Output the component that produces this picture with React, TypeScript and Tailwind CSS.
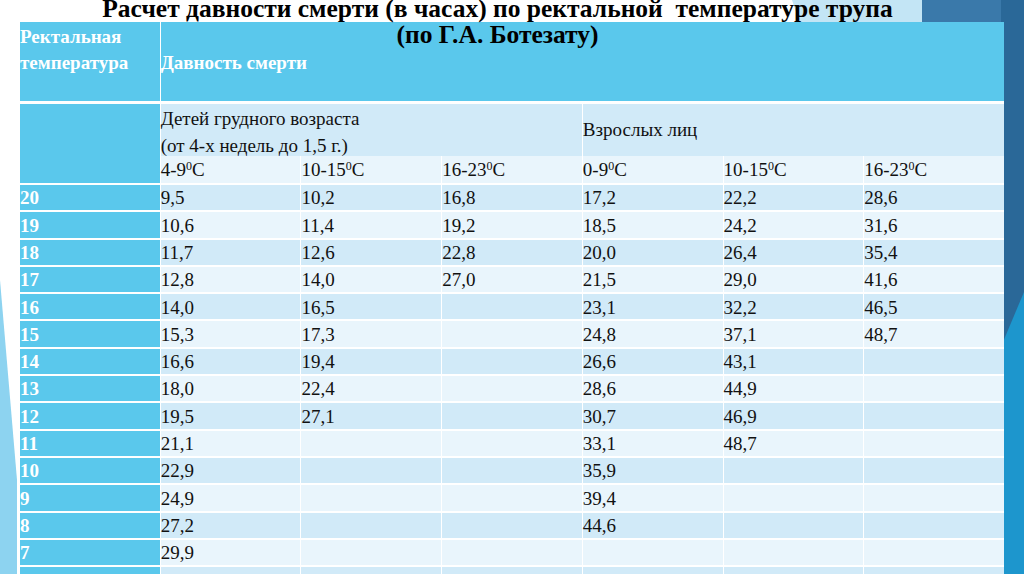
import React from 'react';

type Row = [string, string, string, string, string, string, string];

const rows: Row[] = [
  ['20', '9,5', '10,2', '16,8', '17,2', '22,2', '28,6'],
  ['19', '10,6', '11,4', '19,2', '18,5', '24,2', '31,6'],
  ['18', '11,7', '12,6', '22,8', '20,0', '26,4', '35,4'],
  ['17', '12,8', '14,0', '27,0', '21,5', '29,0', '41,6'],
  ['16', '14,0', '16,5', '', '23,1', '32,2', '46,5'],
  ['15', '15,3', '17,3', '', '24,8', '37,1', '48,7'],
  ['14', '16,6', '19,4', '', '26,6', '43,1', ''],
  ['13', '18,0', '22,4', '', '28,6', '44,9', ''],
  ['12', '19,5', '27,1', '', '30,7', '46,9', ''],
  ['11', '21,1', '', '', '33,1', '48,7', ''],
  ['10', '22,9', '', '', '35,9', '', ''],
  ['9', '24,9', '', '', '39,4', '', ''],
  ['8', '27,2', '', '', '44,6', '', ''],
  ['7', '29,9', '', '', '', '', ''],
  ['6', '33,0', '', '', '', '', ''],
];

const temps = ['4-9', '10-15', '16-23', '0-9', '10-15', '16-23'];

const Backdrop: React.FC = () => (
  <svg className="absolute inset-0" width="1024" height="574" viewBox="0 0 1024 574">
    <polygon points="792,0 922,0 925,24 800,24" fill="#c3e5f5" />
    <rect x="922" y="0" width="102" height="24" fill="#3a79aa" />
    <rect x="1001" y="0" width="23" height="574" fill="#2a6898" />
    <polygon points="1024,292 1024,574 1003,574 1003,342" fill="#1d96cd" />
    <polygon points="0,280 17,480 17,574 0,574" fill="#8dd3f0" />
  </svg>
);

const Temp: React.FC<{ t: string }> = ({ t }) => (
  <span>
    {t}
    <sup className="text-[12px]">0</sup>C
  </span>
);

export default function App() {
  return (
    <div className="relative w-[1024px] h-[574px] overflow-hidden bg-white font-['Liberation_Serif','Times_New_Roman',serif]">
      <Backdrop />

      <div className="relative z-10 -mt-[4px] h-[26px] w-[995px] text-center text-[25.5px] leading-[26px] font-bold text-black">
        <div className="whitespace-pre">Расчет давности смерти (в часах) по ректальной  температуре трупа</div>
        <div>(по Г.А. Ботезату)</div>
      </div>

      <div className="relative ml-[20px] w-[984px] bg-white text-[19px] text-[#111]">
        <div className="grid grid-cols-7 gap-x-px h-[79px]">
          <div className="bg-[#5ac8ec] pt-[2px] text-white font-bold leading-[26px] whitespace-nowrap">
            Ректальная
            <br />
            температура
          </div>
          <div className="col-span-6 bg-[#5ac8ec] flex items-center pt-[3px] text-white font-bold">
            Давность смерти
          </div>
        </div>

        <div className="grid grid-cols-7 gap-x-px grid-rows-[52px_27px] mt-[3px]">
          <div className="row-span-2 bg-[#5ac8ec]" />
          <div className="col-span-3 bg-[#d1eaf8] pt-px leading-[27px]">
            Детей грудного возраста
            <br />
            (от 4-х недель до 1,5 г.)
          </div>
          <div className="col-span-3 bg-[#d1eaf8] flex items-center">Взрослых лиц</div>
          {temps.map((t, i) => (
            <div key={i} className="bg-[#e9f5fc] flex items-center pt-[2px]">
              <Temp t={t} />
            </div>
          ))}
        </div>

        <div className="grid grid-cols-7 gap-x-px gap-y-[2px] auto-rows-[25.3px] mt-[2px]">
          {rows.map((r, ri) => {
            const band = ri % 2 === 0 ? 'bg-[#d1eaf8]' : 'bg-[#e9f5fc]';
            return (
              <React.Fragment key={ri}>
                <div className="bg-[#5ac8ec] flex items-center pt-[2px] text-white font-bold">{r[0]}</div>
                {r.slice(1).map((v, ci) => (
                  <div key={ci} className={`${band} flex items-center pt-[2px]`}>
                    {v}
                  </div>
                ))}
              </React.Fragment>
            );
          })}
        </div>
      </div>
    </div>
  );
}
